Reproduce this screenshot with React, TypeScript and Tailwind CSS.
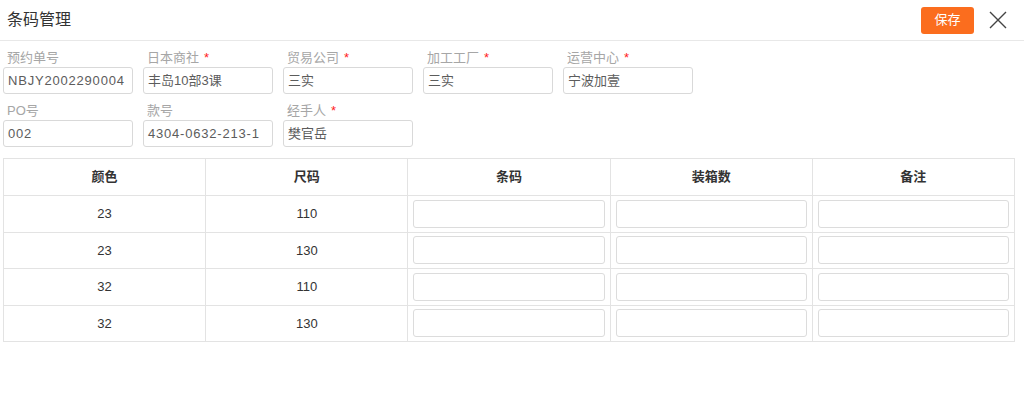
const font = { fontFamily: '"Liberation Sans", "Noto Sans CJK SC", sans-serif' };

type Field = { label: string; value: string; required?: boolean };

const row1: Field[] = [
  { label: '预约单号', value: 'NBJY2002290004' },
  { label: '日本商社', value: '丰岛10部3课', required: true },
  { label: '贸易公司', value: '三实', required: true },
  { label: '加工工厂', value: '三实', required: true },
  { label: '运营中心', value: '宁波加壹', required: true },
];

const row2: Field[] = [
  { label: 'PO号', value: '002' },
  { label: '款号', value: '4304-0632-213-1' },
  { label: '经手人', value: '樊官岳', required: true },
];

const rows = [
  { color: '23', size: '110' },
  { color: '23', size: '130' },
  { color: '32', size: '110' },
  { color: '32', size: '130' },
];

function FormField({ label, value, required }: Field) {
  const latin = /^[\x00-\x7f]+$/.test(value);
  return (
    <div className="w-[130px]">
      <div className="h-[26px] flex items-end pb-[3px] text-[13px] text-[#a6a6a6] leading-none pl-[4px]">
        {label}
        {required && <span className="text-[#ff2020] ml-[5px] text-[13px]">*</span>}
      </div>
      <div
        className={`h-[27px] border border-[#d9d9d9] rounded-[3px] flex items-center px-[4px] text-[13px] text-[#5c5c5c] whitespace-nowrap overflow-hidden ${latin ? 'tracking-[0.8px]' : ''}`}
      >
        {value}
      </div>
    </div>
  );
}

function CellInput() {
  return <div className="h-[28px] mx-[5px] border border-[#dcdcdc] rounded-[3px] bg-white" />;
}

export default function App() {
  return (
    <div className="w-[1024px] h-[398px] bg-white" style={font}>
      {/* 头部 */}
      <div className="h-[41px] border-b border-[#e8e8e8] flex items-center justify-between pl-[7px] pr-[17px]">
        <h1 className="text-[16px] text-[#333] font-normal">条码管理</h1>
        <div className="flex items-center gap-[15px]">
          <button className="h-[27px] w-[53px] rounded-[3px] bg-[#fb6d1e] text-white text-[13px] flex items-center justify-center">
            保存
          </button>
          <svg width="18" height="18" viewBox="0 0 18 18" className="text-[#444]">
            <path d="M1 1 L17 17 M17 1 L1 17" stroke="currentColor" strokeWidth="1.4" fill="none" />
          </svg>
        </div>
      </div>

      {/* 表单 */}
      <div className="px-[3px]">
        <div className="flex gap-[10px]">
          {row1.map(f => <FormField key={f.label} {...f} />)}
        </div>
        <div className="flex gap-[10px]">
          {row2.map(f => <FormField key={f.label} {...f} />)}
        </div>
      </div>

      {/* 明细表 */}
      <div className="px-[3px] mt-[11px] w-[1018px]">
        <table className="w-[1012px] border-collapse table-fixed text-[13px] text-[#333]">
          <thead>
            <tr className="h-[37px]">
              {['颜色', '尺码', '条码', '装箱数', '备注'].map(h => (
                <th key={h} className="border border-[#e3e3e3] font-semibold text-[#333]">{h}</th>
              ))}
            </tr>
          </thead>
          <tbody>
            {rows.map((r, i) => (
              <tr key={i} className="h-[36.5px]">
                <td className="border border-[#e3e3e3] text-center">{r.color}</td>
                <td className="border border-[#e3e3e3] text-center">{r.size}</td>
                <td className="border border-[#e3e3e3]"><CellInput /></td>
                <td className="border border-[#e3e3e3]"><CellInput /></td>
                <td className="border border-[#e3e3e3]"><CellInput /></td>
              </tr>
            ))}
          </tbody>
        </table>
      </div>
    </div>
  );
}
